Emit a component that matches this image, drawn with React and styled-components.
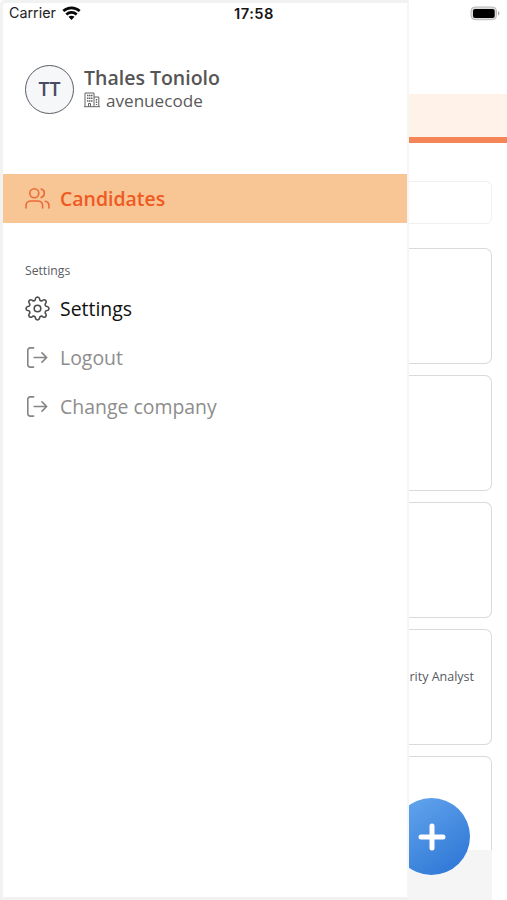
import React from "react";
import styled, { createGlobalStyle } from "styled-components";

const Global = createGlobalStyle`
  * { box-sizing: border-box; }
  body { margin: 0; background: #fff; font-family: "Open Sans", "Noto Sans", sans-serif; }
`;

const Screen = styled.div`
  position: relative;
  display: flex;
  width: 507px;
  height: 900px;
  overflow: hidden;
  background: #fff;
`;

const StatusBar = styled.header`
  position: absolute;
  top: 0;
  left: 0;
  width: 507px;
  height: 27px;
  padding: 0 6px 0 9px;
  display: grid;
  grid-template-columns: 1fr auto 1fr;
  align-items: center;
  font: 400 14.3px/26px Inter, sans-serif;
  color: #222;
`;

const Carrier = styled.div`
  display: flex;
  align-items: center;
  gap: 6px;
  height: 26px;
  align-self: start;
`;

const Clock = styled.div`
  height: 27px;
  margin-right: 2px;
  font-weight: 600;
  font-size: 14.7px;
  line-height: 28px;
  letter-spacing: 0.45px;
  color: #161616;
`;

const BatterySlot = styled.div`
  display: flex;
  align-items: center;
  align-self: start;
  justify-content: flex-end;
  height: 26px;
`;

const Drawer = styled.aside`
  flex: none;
  width: 409px;
  border: 3px solid #f2f2f2;
  border-right: 2px solid #f5f5f5;
  border-radius: 5px 0 0 0;
  background: #fff;
`;

const Profile = styled.section`
  display: flex;
  align-items: center;
  gap: 10px;
  height: 50px;
  margin: 61px 0 0 22px;
`;

const Avatar = styled.div`
  width: 49px;
  height: 49px;
  border: 1.5px solid #5b5c66;
  border-radius: 50%;
  background: #f5f7f8;
  display: flex;
  align-items: center;
  justify-content: center;
  font-size: 19.5px;
  line-height: 24px;
  padding-bottom: 1px;
  font-weight: 600;
  color: #484b66;
`;

const Identity = styled.div`
  margin-top: -2px;
`;

const Name = styled.div`
  font-size: 19.5px;
  line-height: 24px;
  font-weight: 600;
  color: #555;
  white-space: nowrap;
`;

const Company = styled.div`
  display: flex;
  align-items: center;
  gap: 6px;
  font-size: 17.1px;
  line-height: 21px;
  color: #5a5a5a;
`;

const Menu = styled.nav`
  margin-top: 60px;
`;

const tones = {
  active: { ink: "#ee5a22", icon: "#ea6b38", fill: "#f8c595", weight: 600 },
  strong: { ink: "#101010", icon: "#4d4d4d", fill: "transparent", weight: 400 },
  muted: { ink: "#8d8d8d", icon: "#858585", fill: "transparent", weight: 400 },
};

const MenuItem = styled.a`
  display: flex;
  align-items: center;
  gap: 10px;
  height: 49px;
  padding-left: 22px;
  font-size: 19.45px;
  line-height: 28px;
  font-weight: ${(p) => tones[p.$tone].weight};
  color: ${(p) => tones[p.$tone].ink};
  background: ${(p) => tones[p.$tone].fill};
  svg { color: ${(p) => tones[p.$tone].icon}; }
`;

const SectionLabel = styled.h2`
  margin: 40px 0 5px 22px;
  font-size: 12.2px;
  line-height: 16px;
  font-weight: 400;
  color: #585c62;
`;

const Page = styled.main`
  flex: 1;
  min-width: 0;
  height: 900px;
  position: relative;
  overflow: hidden;
  display: flex;
  flex-direction: column;
`;

const Banner = styled.div`
  flex: none;
  height: 49px;
  margin-top: 94px;
  background: #fff2e8;
  border-bottom: 6px solid #f48556;
`;

const SearchBox = styled.div`
  flex: none;
  height: 43px;
  margin: 38px 15px 24px 0;
  border: 1.3px solid #f0f0f0;
  border-left: 0;
  border-radius: 0 6px 6px 0;
`;

const CardList = styled.div`
  display: flex;
  flex-direction: column;
  gap: 11px;
  height: 602px;
  overflow: hidden;
  margin-right: 15px;
`;

const Card = styled.article`
  flex: none;
  height: 116px;
  border: 1.5px solid #dadada;
  border-left: 0;
  border-radius: 0 7px 7px 0;
  padding: 38px 17px 0 0;
  display: flex;
  justify-content: flex-end;
  font-size: 12.5px;
  line-height: 18px;
  color: #565961;
  white-space: nowrap;
`;

const Footer = styled.footer`
  flex: 1;
  margin-right: 15px;
  background: #f5f5f5;
`;

const AddButton = styled.button`
  position: absolute;
  left: -16px;
  top: 798px;
  width: 77px;
  height: 77px;
  padding: 0;
  border: 0;
  border-radius: 50%;
  background: linear-gradient(145deg, #61a3ec 10%, #2f78d6 90%);
  display: flex;
  align-items: center;
  justify-content: center;
`;

const WifiIcon = () => (
  <svg width="19" height="15" viewBox="0 0 19 15">
    <g fill="none" stroke="#080808" strokeWidth="2.7">
      <path d="M1.3 5.1C6 .8 13 .8 17.7 5.1" />
      <path d="M4.3 8.4c2.9-2.7 7.5-2.7 10.4 0" />
    </g>
    <path d="M6.5 10.7c1.7-1.4 4.3-1.4 6 0l-3 3.2z" fill="#080808" />
  </svg>
);

const BatteryIcon = () => (
  <svg width="31" height="15" viewBox="0 0 31 15">
    <rect x="1" y="1" width="25.5" height="12.7" rx="4" fill="#ddd" stroke="#b9b9b9" strokeWidth="1" />
    <rect x="3" y="3" width="21.7" height="9" rx="2" fill="#000" />
    <path d="M28 5.3c2 .5 2 3.7 0 4.2z" fill="#aaa" />
  </svg>
);

const BuildingIcon = () => (
  <svg width="16" height="16" viewBox="0 0 16 16" fill="none" stroke="#626262">
    <path d="M1 14.5V1h9v13.5M10 5h4.8v9.5M0 14.7h16M4.5 14.5v-3h2v3" />
    <path d="M3 3.5h5.5M3 6.2h5.5M3 8.9h5.5" strokeWidth="1.5" strokeDasharray="1.5 .5" />
    <path d="M12.5 7v1.5M12.5 9.5V11M12.5 12v1" strokeWidth="1.4" />
  </svg>
);

const LineIcon = ({ children }) => (
  <svg width="25" height="25" viewBox="0 0 25 25" fill="none" stroke="currentColor"
    strokeWidth="1.6" strokeLinecap="round" strokeLinejoin="round">
    {children}
  </svg>
);

const UsersIcon = () => (
  <LineIcon>
    <circle cx="9.3" cy="7.3" r="4.5" />
    <path d="M1 22v-2.6a4.4 4.4 0 0 1 4.4-4.4h7.8a4.4 4.4 0 0 1 4.4 4.4V22" />
    <path d="M16.2 3a4.5 4.5 0 0 1 0 8.6M20.4 15.2a4.5 4.5 0 0 1 3.5 4.4V22" />
  </LineIcon>
);

/* Eight rounded teeth with deep round hollows between them. */
const gearPath = (() => {
  const at = (r, deg) => {
    const a = (deg * Math.PI) / 180;
    return `${(12.5 + r * Math.cos(a)).toFixed(2)} ${(12.5 + r * Math.sin(a)).toFixed(2)}`;
  };
  let d = `M${at(9.9, -12)}`;
  for (let t = 0; t < 360; t += 45) {
    d += `C${at(10.9, t - 10)} ${at(11.5, t - 6)} ${at(11.5, t)}`;
    d += `C${at(11.5, t + 6)} ${at(10.9, t + 10)} ${at(9.9, t + 12)}`;
    d += `C${at(8, t + 14)} ${at(8, t + 31)} ${at(9.9, t + 33)}`;
  }
  return `${d}Z`;
})();

const GearIcon = () => (
  <LineIcon>
    <path d={gearPath} />
    <circle cx="12.5" cy="12.5" r="3.3" />
  </LineIcon>
);

const ExitIcon = () => (
  <LineIcon>
    <path d="M8.6 2.9H5.1a2.3 2.3 0 0 0-2.3 2.3v14.6a2.3 2.3 0 0 0 2.3 2.3h3.5M9.2 12.5h12.4M17 7.9l4.7 4.6-4.7 4.6" />
  </LineIcon>
);

const PlusIcon = () => (
  <svg width="28" height="28" viewBox="0 0 28 28" stroke="#fff" strokeWidth="5" strokeLinecap="round">
    <path d="M14 3v22M3 14h22" />
  </svg>
);

export default function App() {
  return (
    <>
      <Global />
      <Screen>
        <Drawer>
          <Profile>
            <Avatar>TT</Avatar>
            <Identity>
              <Name>Thales Toniolo</Name>
              <Company><BuildingIcon />avenuecode</Company>
            </Identity>
          </Profile>
          <Menu>
            <MenuItem $tone="active"><UsersIcon />Candidates</MenuItem>
            <SectionLabel>Settings</SectionLabel>
            <MenuItem $tone="strong"><GearIcon />Settings</MenuItem>
            <MenuItem $tone="muted"><ExitIcon />Logout</MenuItem>
            <MenuItem $tone="muted"><ExitIcon />Change company</MenuItem>
          </Menu>
        </Drawer>
        <Page>
          <Banner />
          <SearchBox />
          <CardList>
            <Card />
            <Card />
            <Card />
            <Card>rity Analyst</Card>
            <Card />
          </CardList>
          <Footer />
          <AddButton aria-label="Add"><PlusIcon /></AddButton>
        </Page>
        <StatusBar>
          <Carrier>Carrier<WifiIcon /></Carrier>
          <Clock>17:58</Clock>
          <BatterySlot><BatteryIcon /></BatterySlot>
        </StatusBar>
      </Screen>
    </>
  );
}
